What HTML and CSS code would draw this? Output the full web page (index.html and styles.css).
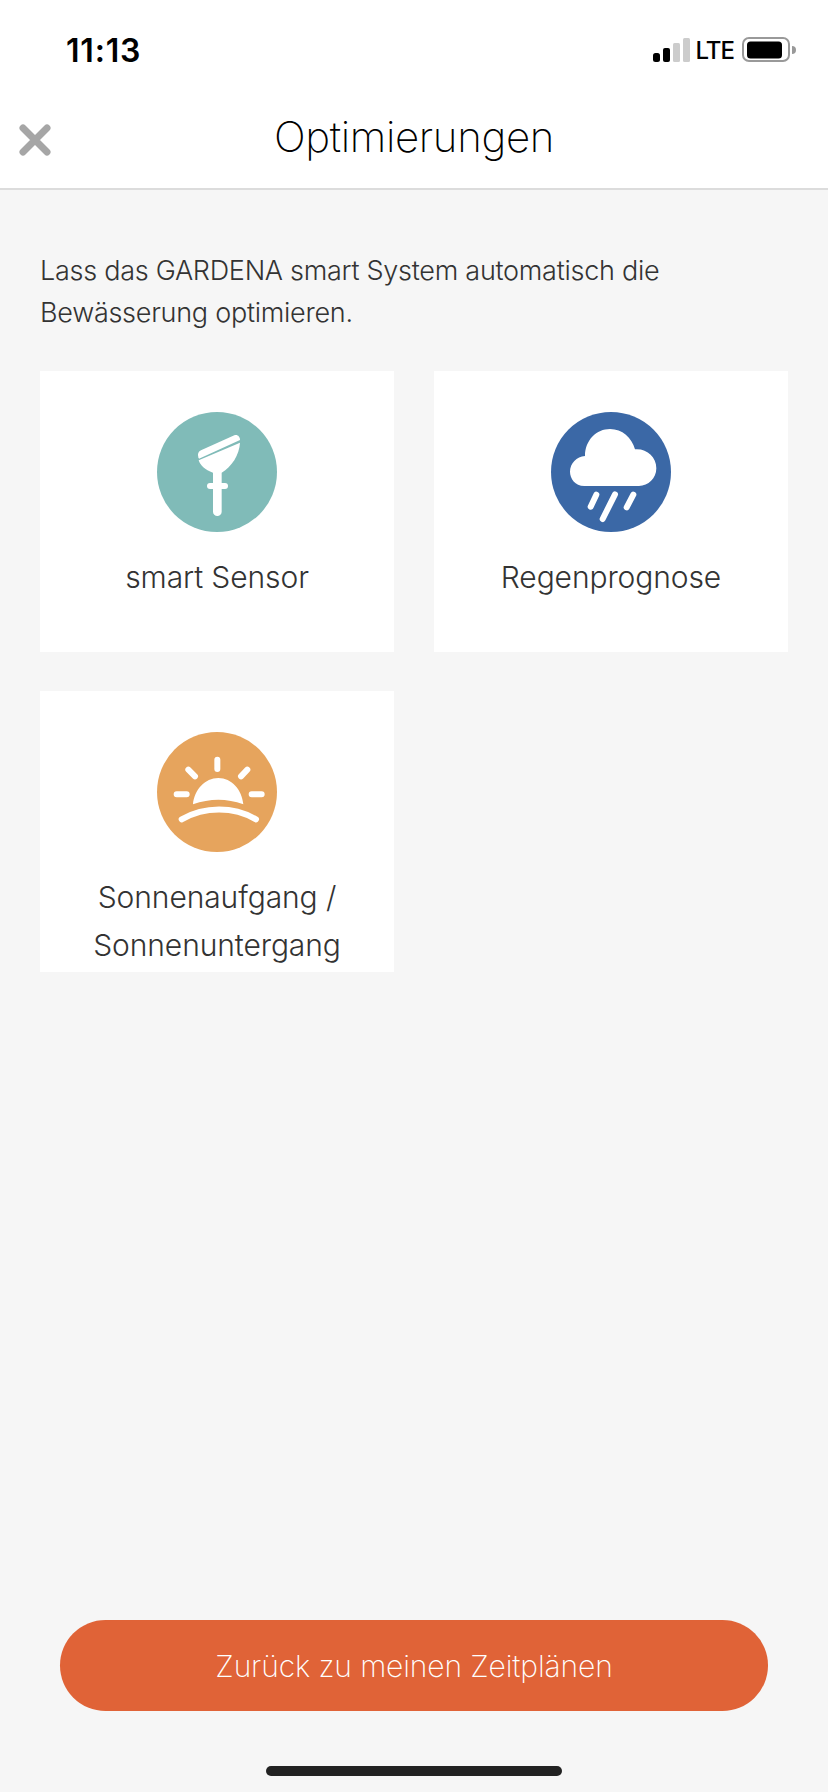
FILE: index.html
```html
<!DOCTYPE html>
<html lang="de">
<head>
<meta charset="utf-8">
<title>Optimierungen</title>
<link rel="stylesheet" href="styles.css">
</head>
<body>
<header class="top">
  <div class="status">
    <span class="time">11:13</span>
    <div class="status-right">
      <svg class="signal" viewBox="0 0 38 24" width="38" height="24">
        <rect x="0" y="15" width="7" height="9" rx="2.5" fill="#000"/>
        <rect x="10" y="10" width="7" height="14" rx="2" fill="#000"/>
        <rect x="20" y="5" width="7" height="19" rx="1.5" fill="#ccc"/>
        <rect x="30" y="0" width="7" height="24" rx="1.5" fill="#ccc"/>
      </svg>
      <span class="lte">LTE</span>
      <svg class="battery" viewBox="0 0 54 26" width="54" height="26">
        <rect x="1" y="1" width="46" height="23" rx="6" fill="none" stroke="#999" stroke-width="2"/>
        <rect x="5" y="4.500" width="35" height="17" rx="3.500" fill="#000"/>
        <path d="M50 9 a4 4 0 0 1 0 8 z" fill="#999"/>
      </svg>
    </div>
  </div>
  <nav class="nav">
    <svg class="close" viewBox="0 0 32 32" width="32" height="32">
      <path d="M4 4 L28 28 M28 4 L4 28" stroke="#a6a6a6" stroke-width="7" stroke-linecap="round"/>
    </svg>
    <h1 class="title">Optimierungen</h1>
  </nav>
</header>
<main class="content">
  <p class="intro">Lass das GARDENA smart System automatisch die Bewässerung optimieren.</p>
  <div class="cards">
    <section class="card">
      <svg class="icon" viewBox="51 36 360 360" width="120" height="120">
        <circle cx="231" cy="216" r="180" fill="#80bbb8"/>
        <path fill="#fff" d="M175 172 C172 160 176 155 183 151 L283 106 C292 102 300 110 300 120 L177 176 Z"/>
        <path fill="#fff" d="M176 181 L300 128 C298 165 275 200 245 218 V335 a13 13 0 0 1 -26 0 V218 C195 210 180 195 176 181 Z"/>
        <rect x="201" y="249" width="63" height="18" rx="9" fill="#fff"/>
      </svg>
      <span class="label">smart Sensor</span>
    </section>
    <section class="card">
      <svg class="icon" viewBox="48 36 360 360" width="120" height="120">
        <circle cx="228" cy="216" r="180" fill="#3b68a6"/>
        <path fill="#fff" d="M148 258 C120 258 105 235 105 215 C105 190 125 170 150 168 C150 120 185 87 225 87 C262 87 290 113 300 148 C335 145 364 170 364 205 C364 235 340 258 312 258 Z"/>
        <path stroke="#fff" stroke-width="18" stroke-linecap="round" fill="none" d="M184 284 L167 320 M240 283 L203 357 M295 284 L275 322"/>
      </svg>
      <span class="label">Regenprognose</span>
    </section>
    <section class="card">
      <svg class="icon" viewBox="51 45 360 360" width="120" height="120">
        <circle cx="231" cy="225" r="180" fill="#e6a45d"/>
        <path fill="#fff" d="M159 262 C163 218 195 183 235 183 C275 183 306 218 310 262 C260 244 210 244 159 262 Z"/>
        <path stroke="#fff" stroke-width="18" stroke-linecap="round" fill="none" d="M232 128 V156 M145 158 L165 178 M322 158 L303 178 M110 232 H140 M335 232 H365 M125 307 C195 268 280 268 348 307"/>
      </svg>
      <span class="label">Sonnenaufgang / Sonnenuntergang</span>
    </section>
  </div>
</main>
<footer class="bottom">
  <button class="back" type="button">Zurück zu meinen Zeitplänen</button>
  <div class="home-bar"></div>
</footer>
</body>
</html>
```
FILE: styles.css
```css
* { box-sizing: border-box; }
html, body { margin: 0; padding: 0; }
body {
  width: 828px;
  height: 1792px;
  display: flex;
  flex-direction: column;
  background: #f6f6f6;
  color: #333;
  font-family: Inter, "Liberation Sans", sans-serif;
  font-weight: 300;
  overflow: hidden;
}
.top {
  background: #fff;
  border-bottom: 2px solid #dcdcdc;
}
.status {
  height: 88px;
  padding: 12px 32px 0 66px;
  display: flex;
  align-items: center;
  justify-content: space-between;
}
.time {
  font-size: 32px;
  font-weight: 600;
  color: #000;
  letter-spacing: 0.8px;
}
.status-right {
  display: flex;
  align-items: center;
  gap: 5px;
}
.lte {
  margin-right: 3px;
  font-size: 24px;
  font-weight: 500;
  color: #000;
  letter-spacing: -1px;
}
.nav {
  height: 100px;
  position: relative;
  display: flex;
  align-items: center;
  justify-content: center;
}
.close {
  position: absolute;
  left: 19px;
  top: 36px;
}
.title {
  margin: 0 0 4px;
  font-size: 42px;
  font-weight: 200;
  color: #000;
  letter-spacing: -0.35px;
}
.content {
  flex: 1;
  padding: 60px 40px 0;
}
.intro {
  margin: 0 0 37px;
  width: 700px;
  font-size: 27px;
  font-weight: 300;
  line-height: 42px;
  letter-spacing: -0.27px;
}
.cards {
  display: grid;
  grid-template-columns: 354px 354px;
  grid-auto-rows: 281px;
  column-gap: 40px;
  row-gap: 39px;
}
.card {
  background: #fff;
  padding: 41px 20px 0;
  display: flex;
  flex-direction: column;
  align-items: center;
  text-align: center;
}
.icon { flex: none; }
.label {
  margin-top: 21px;
  font-size: 30px;
  line-height: 48px;
  letter-spacing: -0.1px;
}
.bottom {
  display: flex;
  flex-direction: column;
  align-items: center;
}
.back {
  width: 708px;
  height: 91px;
  border: 0;
  border-radius: 46px;
  background: #e06337;
  color: #fff;
  font-family: inherit;
  font-weight: 200;
  font-size: 30px;
  letter-spacing: -0.12px;
}
.home-bar {
  width: 296px;
  height: 10px;
  margin: 55px 0 16px;
  border-radius: 5px;
  background: #222;
}
```
